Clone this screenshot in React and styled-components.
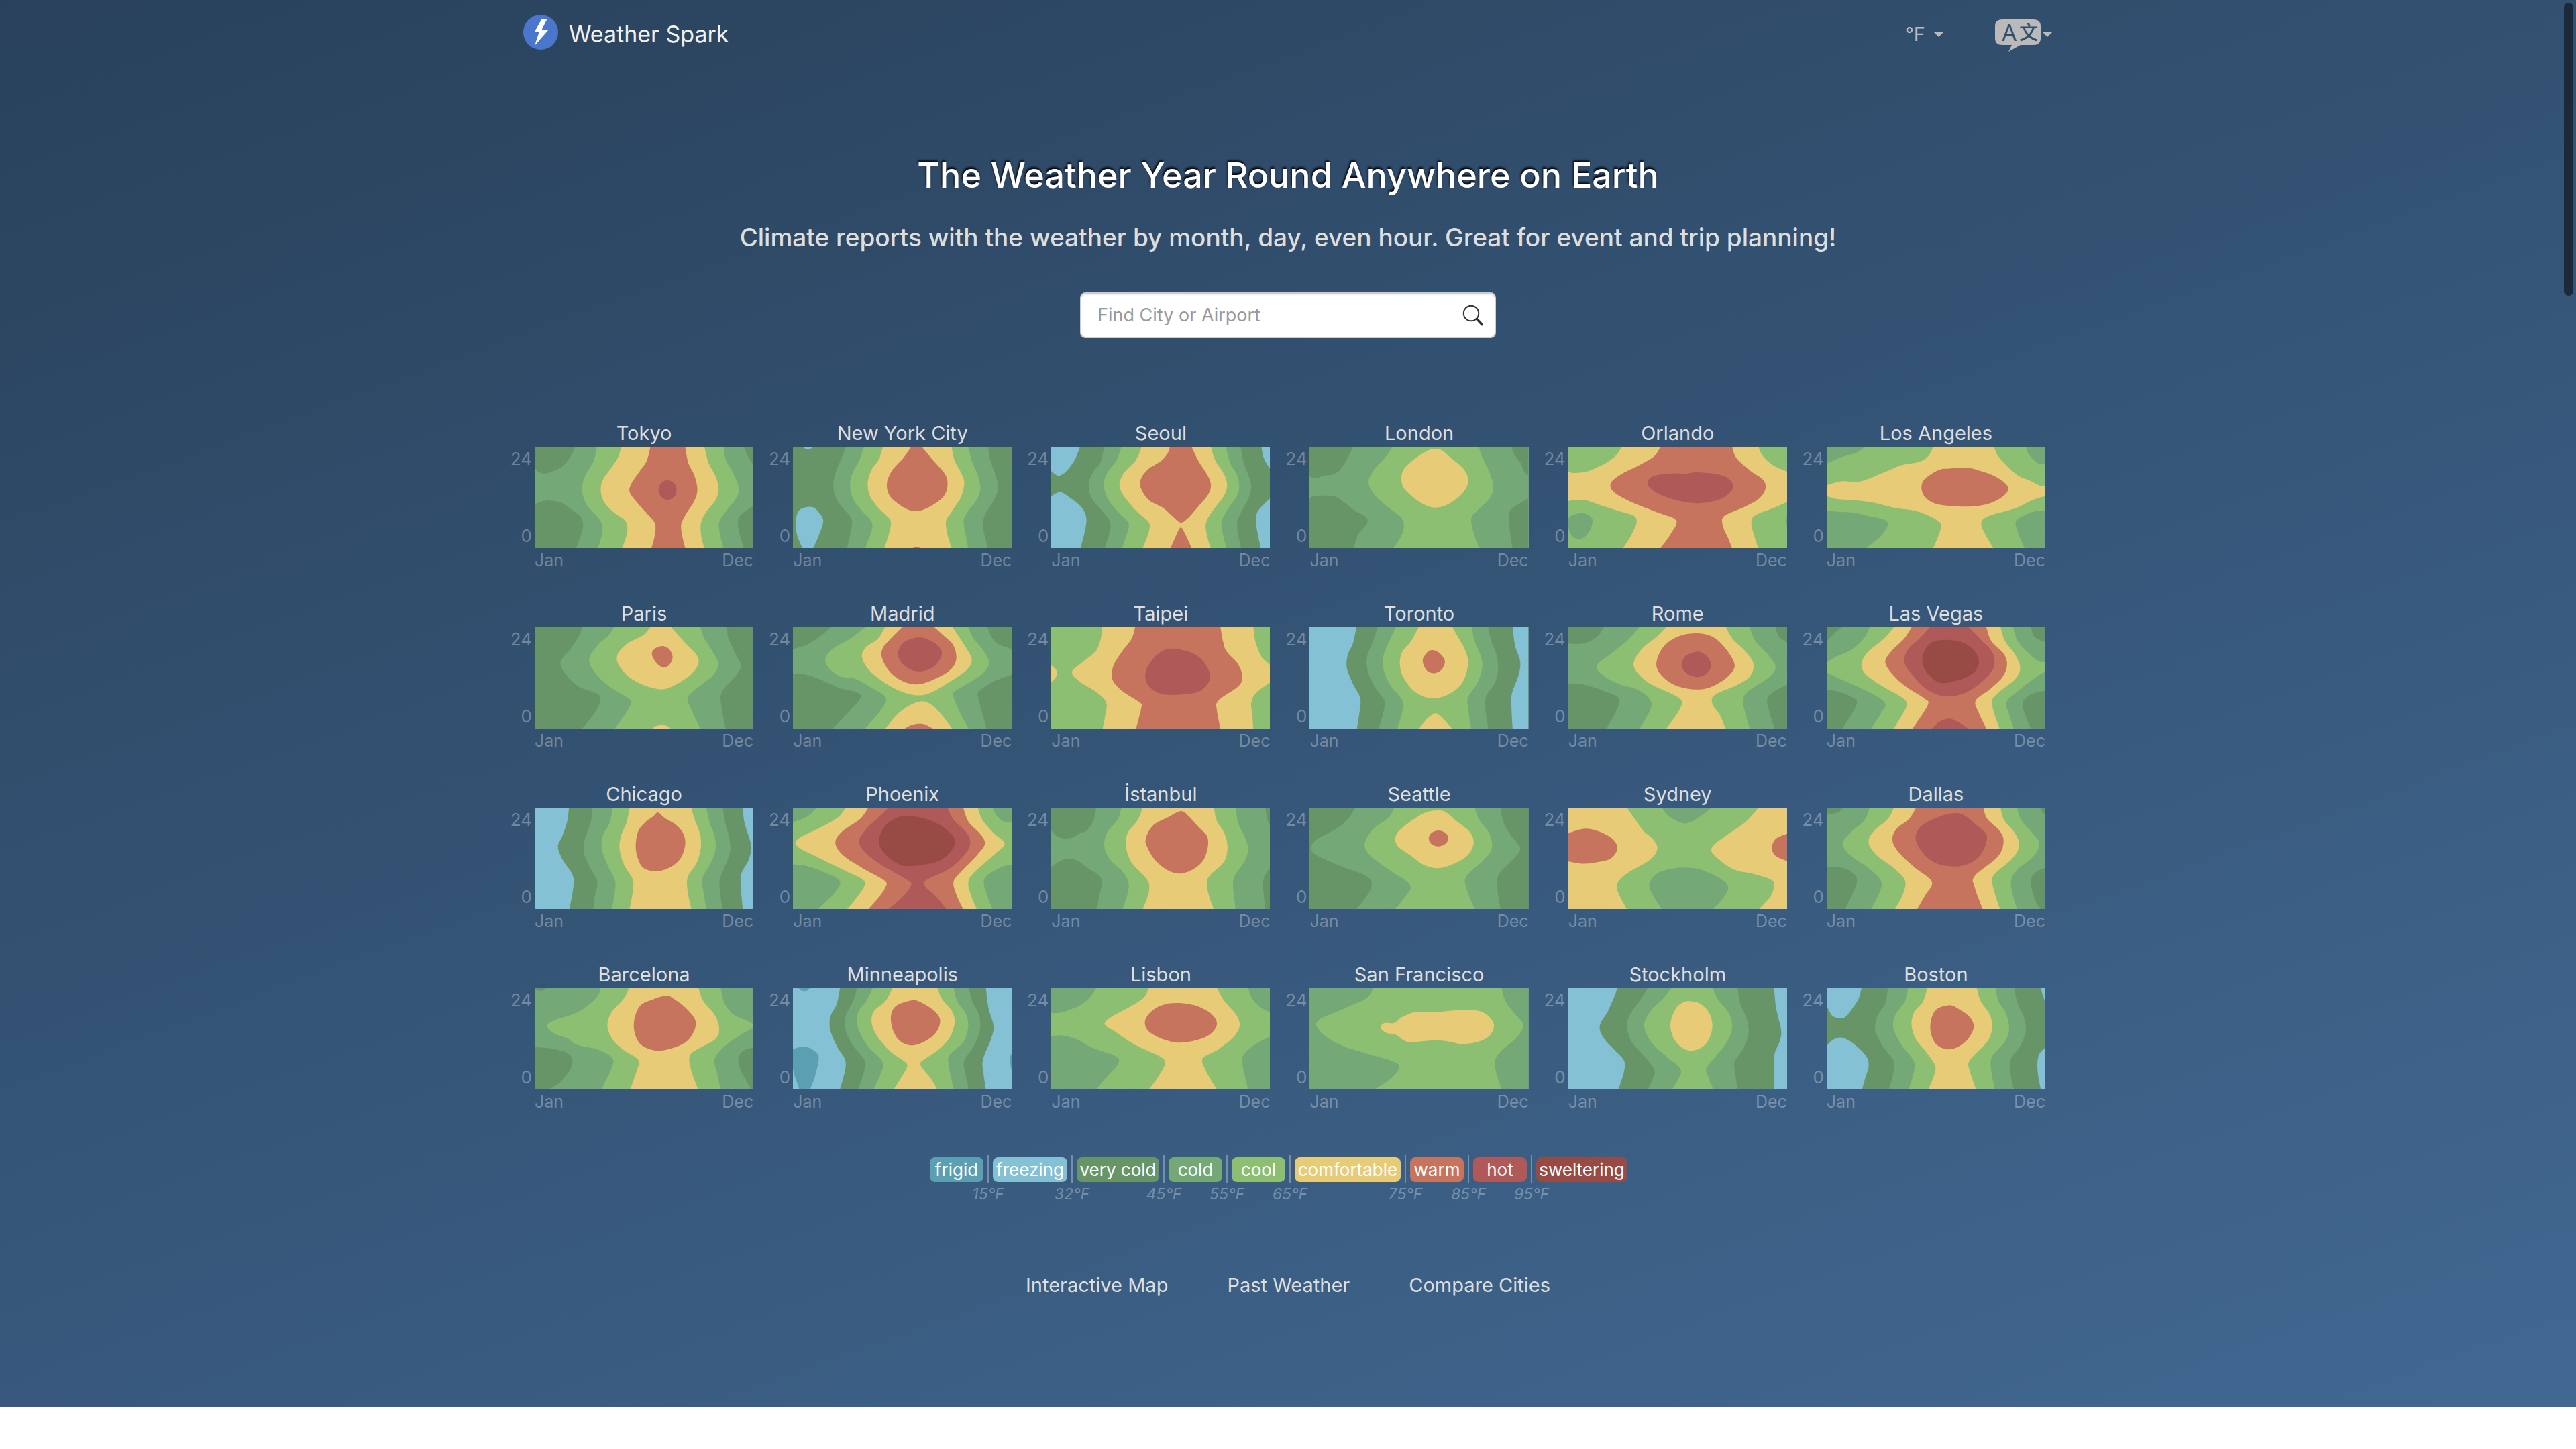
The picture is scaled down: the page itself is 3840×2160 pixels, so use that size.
import React from 'react';
import styled, { createGlobalStyle } from 'styled-components';

const GlobalStyle = createGlobalStyle`
  *, *::before, *::after { box-sizing: border-box; }
  body {
    margin: 0;
    background: #fff;
    font-family: Inter, "Noto Sans", "Noto Sans CJK SC", sans-serif;
  }
`;

const BANDS = {
  f: '#5b9fb3',
  z: '#84c1d4',
  v: '#689567',
  c: '#75a877',
  g: '#8cbf71',
  y: '#e8cb77',
  w: '#c7745f',
  h: '#af5958',
  s: '#984b44',
};

/* ---------- contour geometry ---------- */

const parse = (text) =>
  text.trim().split(/\s+/).map((pair) => pair.split(',').map(Number));

const segment = (a, b, c, d) => {
  const k = 6;
  const x1 = b[0] + (c[0] - a[0]) / k;
  const y1 = b[1] + (c[1] - a[1]) / k;
  const x2 = c[0] - (d[0] - b[0]) / k;
  const y2 = c[1] - (d[1] - b[1]) / k;
  return `C${x1.toFixed(1)},${y1.toFixed(1)} ${x2.toFixed(1)},${y2.toFixed(1)} ${c[0]},${c[1]}`;
};

const openCurve = (p) =>
  p.slice(1).map((pt, i) => segment(p[i - 1] || p[i], p[i], pt, p[i + 2] || pt)).join('');

const closedCurve = (p) => {
  const n = p.length;
  return p.map((pt, i) => segment(p[(i + n - 1) % n], pt, p[(i + 1) % n], p[(i + 2) % n])).join('');
};

/* 'o' is an island, 'b' a band between two top-to-bottom curves, 'e' curves joined by straight edges */
const contourPath = (kind, text) => {
  const curves = text.split('|').map(parse);
  if (kind === 'o') return `M${curves[0][0]}${closedCurve(curves[0])}Z`;
  if (kind === 'b') curves[1].reverse();
  return curves.map((p, i) => `${i ? 'L' : 'M'}${p[0]}${openCurve(p)}`).join('') + 'Z';
};

/* ---------- data ---------- */

const CITIES = [
  { name: 'Tokyo', base: 'c', at: [76, 138], shapes: [
    ['v', 'e', '156,138 148,178 130,228 100,256 84,250 76,230|76,138'],
    ['v', 'e', '76,395 90,382 106,378 130,388 150,420 167,450 172,490 165,550 158,591|76,591'],
    ['v', 'e', '490,138 498,180 509,220|509,138'],
    ['v', 'e', '509,402 490,430 479,460 480,510 490,591|509,591'],
    ['g', 'b', '199,138 193,200 180,250 171,300 171,350 180,400 200,450 210,490 208,540 201,591|450,138 455,200 470,260 480,325 474,370 455,425 441,475 443,530 450,591'],
    ['y', 'b', '248,138 240,190 225,240 210,290 207,340 215,390 235,435 256,470 259,520 249,591|412,138 420,210 434,270 440,325 434,375 415,430 405,480 406,540 412,591'],
    ['w', 'b', '305,138 298,200 283,250 268,300 264,340 280,390 300,440 314,480 314,530 307,591|374,138 380,210 392,265 398,325 393,375 375,440 366,485 368,535 374,591'],
    ['h', 'o', '339,286 353,304 357,335 352,362 339,375 326,360 321,330 327,300'],
  ] },
  { name: 'New York City', base: 'v', at: [587, 138], shapes: [
    ['z', 'e', '627,591 637,540 647,470 638,430 627,408 612,408 598,425 593,470 595,530 606,591'],
    ['z', 'e', '607,138 612,147 619,150 627,138'],
    ['c', 'b', '692,138 683,190 672,250 667,305 671,360 685,410 702,455 703,500 694,591|973,138 978,200 988,265 993,320 986,370 970,430 963,475 966,530 973,591'],
    ['g', 'b', '728,138 718,200 706,250 700,305 706,370 724,425 742,470 743,510 730,591|934,138 941,200 952,260 958,320 952,370 935,420 925,465 928,520 934,591'],
    ['y', 'b', '765,138 757,195 743,240 735,300 740,360 758,415 778,460 780,500 768,591|901,138 907,200 920,255 926,300 920,360 902,425 890,470 893,530 901,591'],
    ['w', 'e', '821,138 805,190 783,245 773,300 778,355 800,400 820,422 840,422 862,400 885,360 893,310 888,260 865,200 842,138'],
    ['w', 'e', '823,591 831,584 841,591'],
  ] },
  { name: 'Seoul', base: 'v', at: [1099, 138], shapes: [
    ['z', 'e', '1156,138 1146,195 1130,245 1116,267 1108,262 1099,246|1099,138'],
    ['z', 'e', '1099,360 1108,346 1118,341 1130,355 1158,405 1168,450 1167,500 1157,591|1099,591'],
    ['z', 'e', '1515,138 1520,190 1533,240|1533,138'],
    ['z', 'e', '1533,367 1520,395 1507,430 1504,470 1508,530 1514,591|1533,591'],
    ['c', 'b', '1204,138 1196,210 1181,255 1173,310 1180,370 1200,425 1215,470 1215,515 1205,591|1474,138 1480,210 1490,270 1495,310 1490,365 1475,430 1467,475 1469,530 1475,591'],
    ['g', 'b', '1238,138 1228,200 1211,250 1203,305 1211,370 1230,425 1251,475 1251,510 1239,591|1445,138 1453,210 1466,260 1471,310 1466,360 1446,425 1436,475 1439,530 1446,591'],
    ['y', 'b', '1278,138 1266,200 1243,255 1234,310 1245,365 1270,430 1292,475 1292,520 1280,591|1415,138 1424,200 1441,260 1447,310 1440,360 1418,425 1405,480 1408,540 1415,591'],
    ['w', 'e', '1334,138 1330,165 1317,200 1290,240 1276,285 1277,325 1292,375 1320,410 1340,450 1355,476 1368,460 1390,405 1410,350 1415,305 1407,260 1390,200 1377,138'],
    ['w', 'e', '1335,591 1345,540 1353,502 1358,502 1368,545 1377,591'],
  ] },
  { name: 'London', base: 'c', at: [44, 138], shapes: [
    ['v', 'e', '130,138 120,185 105,240 90,262 72,266 58,278 44,270|44,138'],
    ['v', 'e', '44,368 55,357 92,359 112,385 135,425 155,450 158,480 140,530 132,591|44,591'],
    ['v', 'e', '444,138 450,175 462,210 468,245 477,265|477,138'],
    ['v', 'e', '477,370 460,390 442,420 439,450 441,520 446,591|477,591'],
    ['g', 'b', '208,138 196,180 172,240 161,295 172,350 198,405 224,450 231,490 225,540 210,591|379,138 387,190 400,250 408,315 400,370 375,425 364,460 370,530 380,591'],
    ['y', 'o', '293,147 308,157 325,190 350,240 358,295 345,350 318,395 293,410 270,395 245,355 228,310 228,250 245,205 275,158'],
  ] },
  { name: 'Orlando', base: 'y', at: [555, 138], shapes: [
    ['g', 'e', '660,138 650,175 630,210 610,232 592,248 570,255 555,251|555,138'],
    ['g', 'e', '555,380 570,375 590,377 620,400 660,428 684,445 690,475 680,530 663,591|555,591'],
    ['g', 'e', '931,138 940,180 960,220 989,250|989,138'],
    ['g', 'e', '989,383 960,412 925,443 917,475 922,530 931,591|989,591'],
    ['c', 'o', '577,434 593,440 603,465 598,510 587,540 576,552 565,540 557,515 555,480 557,450'],
    ['c', 'e', '989,445 985,470 989,500'],
    ['w', 'b', '737,138 725,180 697,218 660,260 639,300 645,340 680,385 730,430 768,466 758,525 737,591|879,138 888,190 915,245 940,285 945,325 932,370 900,410 862,450 862,500 871,545 879,591'],
    ['h', 'o', '712,300 718,275 740,260 770,256 785,259 810,252 850,261 872,280 881,318 865,360 840,382 808,390 775,380 740,355 718,325'],
  ] },
  { name: 'Los Angeles', base: 'g', at: [1067, 138], shapes: [
    ['c', 'e', '1143,138 1125,165 1095,185 1067,213|1067,138'],
    ['c', 'e', '1067,422 1085,427 1120,432 1150,447 1180,463 1188,487 1175,535 1145,591|1067,591'],
    ['c', 'e', '1461,138 1468,175 1485,212 1501,217|1501,138'],
    ['c', 'e', '1501,422 1480,425 1455,447 1441,475 1447,530 1459,591|1501,591'],
    ['y', 'e', '1278,138 1268,180 1250,205 1215,220 1185,248 1145,285 1125,295 1095,292 1067,310|1067,358 1090,372 1130,378 1165,390 1205,412 1245,425 1285,465 1293,500 1278,591|1397,591 1380,525 1373,475 1390,445 1440,413 1475,375 1501,357|1501,315 1490,312 1470,290 1445,265 1420,215 1405,175 1398,138'],
    ['w', 'o', '1347,232 1380,252 1408,280 1426,318 1418,355 1390,390 1347,405 1290,396 1265,370 1255,330 1260,285 1288,242 1310,235'],
  ] },
  { name: 'Paris', base: 'v', at: [76, 948], shapes: [
    ['c', 'b', '170,948 163,990 145,1050 127,1105 140,1165 165,1215 200,1245 206,1275 195,1330 170,1400|455,948 460,1000 472,1060 484,1120 472,1170 447,1235 445,1290 454,1400'],
    ['g', 'b', '233,948 222,985 200,1030 184,1090 195,1150 225,1215 264,1270 262,1310 235,1400|404,948 412,1000 428,1055 439,1110 430,1160 400,1215 379,1260 385,1310 404,1400'],
    ['y', 'e', '305,948 290,985 260,1020 241,1065 241,1110 260,1165 290,1205 325,1225 350,1210 385,1160 400,1110 396,1070 375,1020 346,948'],
    ['w', 'o', '328,1032 342,1045 349,1080 343,1115 331,1128 318,1110 308,1070 313,1045'],
    ['y', 'e', '309,1400 318,1387 335,1386 345,1400'],
  ] },
  { name: 'Madrid', base: 'c', at: [587, 948], shapes: [
    ['v', 'e', '663,948 640,990 615,1025 587,1046|587,948'],
    ['v', 'e', '587,1158 610,1158 640,1180 680,1220 713,1238 721,1262 700,1320 666,1400|587,1400'],
    ['v', 'e', '972,948 980,990 995,1025 1022,1046|1022,948'],
    ['v', 'e', '1022,1158 985,1190 955,1235 955,1275 963,1340 970,1400|1022,1400'],
    ['g', 'b', '730,948 700,1000 665,1045 651,1090 658,1130 680,1167 710,1178 740,1215 771,1262 760,1320 730,1400|934,948 945,1000 965,1055 975,1110 960,1160 925,1210 905,1240 908,1280 920,1340 935,1400'],
    ['y', 'e', '769,948 755,1000 730,1040 724,1085 740,1145 775,1205 805,1238 835,1252 862,1238 895,1195 930,1140 941,1095 930,1040 903,948'],
    ['w', 'e', '803,948 780,1000 764,1045 764,1090 780,1150 805,1190 833,1203 862,1185 895,1145 910,1095 905,1030 885,985 867,948'],
    ['h', 'o', '835,993 860,1008 878,1040 881,1075 865,1125 835,1145 808,1120 795,1070 805,1018'],
    ['y', 'e', '770,1400 790,1345 815,1300 842,1278 862,1295 880,1335 902,1400'],
    ['w', 'e', '808,1400 825,1382 845,1380 864,1400'],
  ] },
  { name: 'Taipei', base: 'y', at: [1099, 948], shapes: [
    ['g', 'e', '1200,948 1197,1000 1187,1055 1160,1105 1140,1148 1155,1190 1190,1240 1208,1285 1206,1340 1201,1400|1099,1400|1099,948'],
    ['g', 'e', '1499,948 1503,1010 1515,1078 1533,1118|1533,948'],
    ['g', 'e', '1533,1193 1505,1240 1495,1285 1497,1340 1499,1400|1533,1400'],
    ['y', 'e', '1099,1118 1108,1135 1111,1155 1106,1178 1099,1192'],
    ['w', 'b', '1265,948 1258,1000 1238,1060 1222,1120 1220,1180 1238,1230 1275,1285 1277,1310 1267,1400|1434,948 1439,1010 1446,1055 1468,1110 1477,1165 1470,1210 1430,1275 1427,1320 1434,1400'],
    ['h', 'o', '1338,1043 1375,1060 1400,1100 1414,1165 1405,1210 1385,1240 1335,1250 1305,1235 1288,1195 1286,1145 1300,1090 1318,1055'],
  ] },
  { name: 'Toronto', base: 'v', at: [44, 948], shapes: [
    ['z', 'e', '137,948 130,1020 120,1070 118,1130 130,1200 144,1260 144,1310 138,1400|44,1400|44,948'],
    ['z', 'e', '446,948 451,1030 461,1100 458,1160 444,1250 444,1320 446,1400|477,1400|477,948'],
    ['c', 'b', '179,948 170,1010 158,1080 160,1150 175,1220 192,1275 190,1330 181,1400|398,948 404,1010 414,1070 417,1140 410,1200 392,1265 393,1330 398,1400'],
    ['g', 'b', '215,948 202,1010 190,1080 191,1140 205,1210 228,1275 228,1320 218,1400|365,948 371,1010 382,1070 386,1120 378,1190 358,1260 358,1310 364,1400'],
    ['y', 'e', '260,948 245,1010 227,1060 223,1120 232,1180 255,1240 290,1266 325,1240 348,1190 358,1110 352,1050 340,1000 327,948'],
    ['w', 'o', '288,1050 302,1065 312,1100 305,1138 290,1153 275,1138 268,1095 277,1060'],
    ['y', 'e', '261,1400 275,1360 290,1334 298,1336 312,1365 326,1400'],
  ] },
  { name: 'Rome', base: 'c', at: [555, 948], shapes: [
    ['v', 'e', '625,948 612,990 590,1017 570,1023 555,1020|555,948'],
    ['v', 'e', '555,1200 568,1199 590,1207 625,1232 655,1265 650,1320 630,1400|555,1400'],
    ['v', 'e', '965,948 972,990 989,1020|989,948'],
    ['v', 'e', '989,1203 965,1230 949,1265 952,1320 963,1400|989,1400'],
    ['g', 'b', '695,948 675,1000 640,1065 611,1120 625,1165 655,1202 690,1225 715,1265 718,1310 696,1400|914,948 925,1010 950,1070 965,1125 950,1175 910,1235 901,1275 905,1330 914,1400'],
    ['y', 'b', '748,948 730,990 700,1045 684,1110 695,1160 720,1205 775,1265 776,1310 749,1400|867,948 880,1000 905,1055 921,1110 915,1165 890,1205 845,1250 840,1290 855,1340 866,1400'],
    ['w', 'o', '811,975 840,990 865,1040 884,1115 872,1165 848,1203 822,1224 790,1222 760,1200 738,1160 729,1115 737,1055 755,1010 780,983'],
    ['h', 'o', '815,1058 830,1080 838,1120 828,1155 811,1170 790,1155 779,1120 785,1080 800,1062'],
  ] },
  { name: 'Las Vegas', base: 'c', at: [1067, 948], shapes: [
    ['v', 'e', '1096,948 1082,975 1067,1010|1067,948'],
    ['v', 'e', '1067,1227 1090,1235 1115,1257 1127,1282 1118,1330 1098,1400|1067,1400'],
    ['v', 'e', '1471,948 1478,990 1495,1010 1501,1010|1501,948'],
    ['v', 'e', '1501,1230 1480,1240 1460,1265 1455,1295 1460,1340 1471,1400|1501,1400'],
    ['g', 'e', '1152,948 1140,1000 1115,1050 1085,1080 1067,1105|1067,1150 1095,1180 1130,1215 1165,1255 1183,1290 1175,1330 1155,1400|1437,1400 1427,1330 1423,1280 1450,1225 1485,1165 1501,1145|1501,1105 1485,1098 1465,1060 1445,1010 1436,948'],
    ['y', 'b', '1200,948 1180,1000 1150,1055 1136,1110 1145,1160 1180,1215 1215,1260 1225,1300 1200,1400|1411,948 1420,1010 1440,1070 1450,1130 1440,1180 1415,1225 1395,1270 1397,1320 1409,1400'],
    ['w', 'b', '1235,948 1220,1000 1195,1055 1183,1105 1200,1165 1225,1215 1260,1265 1267,1295 1237,1400|1383,948 1393,1010 1417,1065 1424,1115 1415,1170 1390,1225 1362,1275 1368,1330 1383,1400'],
    ['h', 'e', '1271,948 1250,1000 1227,1050 1221,1105 1240,1170 1268,1230 1303,1256 1340,1242 1375,1190 1398,1125 1395,1060 1375,1010 1348,948'],
    ['s', 'o', '1300,1004 1335,1015 1358,1050 1368,1095 1362,1140 1340,1175 1300,1197 1278,1180 1260,1130 1257,1075 1272,1020'],
    ['h', 'e', '1275,1400 1290,1370 1308,1356 1325,1368 1347,1400'],
  ] },
  { name: 'Chicago', base: 'v', at: [76, 135], shapes: [
    ['z', 'e', '144,135 140,200 130,265 122,310 132,370 150,430 153,480 145,588|76,588|76,135'],
    ['z', 'e', '488,135 491,200 500,265 505,315 499,370 485,430 484,490 488,588|509,588|509,135'],
    ['c', 'b', '191,135 187,200 176,270 173,330 185,400 200,465 195,530 192,588|448,135 454,210 461,270 463,330 452,400 442,460 444,530 448,588'],
    ['g', 'b', '230,135 225,200 211,260 209,320 220,390 235,460 234,520 229,588|416,135 422,200 432,260 434,320 425,380 408,450 410,510 416,588'],
    ['y', 'b', '264,135 258,200 247,260 244,320 253,390 270,455 270,510 264,588|386,135 393,190 403,250 405,310 397,380 379,445 379,510 386,588'],
    ['w', 'o', '320,156 333,180 355,210 370,250 374,300 365,360 345,400 318,419 292,405 280,360 276,305 281,240 295,200 310,175'],
  ] },
  { name: 'Phoenix', base: 'g', at: [587, 135], shapes: [
    ['c', 'e', '634,135 615,175 587,200|587,135'],
    ['c', 'e', '587,389 610,393 640,415 680,463 665,525 636,588|587,588'],
    ['c', 'e', '982,135 990,170 1005,198 1022,200|1022,135'],
    ['c', 'e', '1022,388 1000,400 970,440 965,475 972,530 982,588|1022,588'],
    ['y', 'b', '692,135 675,180 640,225 597,275 597,310 630,350 680,405 725,455 728,485 710,545 694,588|953,135 962,190 985,250 1006,295 985,345 945,425 934,470 940,530 951,588'],
    ['w', 'b', '736,135 720,185 685,240 671,290 685,345 725,405 768,460 770,490 755,540 736,588|924,135 935,200 957,250 967,295 952,345 920,420 905,465 910,520 924,588'],
    ['h', 'b', '776,135 755,180 730,235 718,285 730,335 765,395 815,460 820,485 805,530 776,588|893,135 905,190 930,245 938,295 925,350 895,410 850,460 850,490 870,530 891,588'],
    ['s', 'o', '815,171 850,185 880,215 903,260 908,295 895,340 870,378 815,396 790,380 765,330 757,280 770,215 795,178'],
  ] },
  { name: 'İstanbul', base: 'c', at: [1099, 135], shapes: [
    ['v', 'e', '1188,135 1183,190 1170,235 1155,250 1140,269 1122,272 1108,258 1099,235|1099,135'],
    ['v', 'e', '1099,400 1112,378 1130,363 1150,370 1172,405 1195,440 1199,475 1193,540 1190,588|1099,588'],
    ['v', 'e', '1523,135 1527,190 1533,220|1533,135'],
    ['v', 'e', '1533,405 1522,435 1518,475 1520,530 1523,588|1533,588'],
    ['g', 'b', '1238,135 1230,190 1210,245 1204,305 1215,365 1240,420 1252,470 1250,520 1240,588|1464,135 1470,210 1483,270 1489,325 1480,380 1462,440 1459,490 1464,588'],
    ['y', 'b', '1280,135 1270,190 1250,250 1247,310 1258,380 1285,445 1293,480 1290,530 1280,588|1421,135 1427,195 1442,250 1448,315 1440,380 1412,440 1407,480 1413,540 1421,588'],
    ['w', 'o', '1355,150 1370,170 1390,220 1407,260 1409,310 1400,370 1380,410 1355,429 1330,415 1305,370 1290,315 1286,275 1300,215 1330,178'],
  ] },
  { name: 'Seattle', base: 'v', at: [44, 135], shapes: [
    ['c', 'b', '135,135 122,180 100,225 60,275 47,315 60,350 105,395 155,438 167,475 160,520 137,588|422,135 428,200 443,260 461,318 445,370 418,435 416,500 422,588'],
    ['g', 'b', '212,135 200,180 168,235 153,300 165,350 200,410 243,480 232,535 213,588|371,135 380,190 400,250 405,315 388,370 355,440 354,490 371,588'],
    ['y', 'o', '299,147 315,157 335,195 360,240 369,290 358,345 330,385 299,405 270,390 245,350 218,305 215,260 230,220 270,160'],
    ['w', 'o', '299,237 313,247 319,272 313,297 299,308 285,297 280,270 286,247'],
  ] },
  { name: 'Sydney', base: 'g', at: [555, 135], shapes: [
    ['y', 'e', '671,135 685,180 702,235 722,275 731,320 715,370 670,430 651,480 657,530 671,588|555,588|555,135'],
    ['y', 'e', '931,135 905,200 870,255 838,318 855,370 885,413 920,430 955,455 962,480 955,530 932,588|989,588|989,135'],
    ['w', 'e', '555,248 585,229 610,237 640,270 652,315 640,360 615,377 585,385 555,375'],
    ['w', 'e', '989,250 965,275 958,315 965,350 989,375'],
    ['c', 'e', '740,135 755,175 785,205 812,180 838,135'],
    ['c', 'e', '740,588 725,535 715,480 730,430 760,407 785,402 815,410 850,445 871,485 862,535 841,588'],
  ] },
  { name: 'Dallas', base: 'c', at: [1067, 135], shapes: [
    ['v', 'e', '1100,135 1090,155 1067,167|1067,135'],
    ['v', 'e', '1067,398 1100,405 1120,430 1127,465 1115,535 1103,588|1067,588'],
    ['v', 'e', '1490,135 1494,155 1501,165|1501,135'],
    ['v', 'e', '1501,402 1480,425 1471,460 1477,530 1489,588|1501,588'],
    ['g', 'b', '1152,135 1142,190 1115,245 1099,297 1115,350 1150,405 1174,460 1172,510 1155,588|1444,135 1452,190 1475,250 1488,297 1475,355 1445,410 1432,460 1435,520 1444,588'],
    ['y', 'b', '1200,135 1188,185 1160,240 1150,290 1165,345 1200,405 1222,460 1218,520 1202,588|1411,135 1418,190 1440,250 1448,305 1435,360 1400,430 1395,475 1410,588'],
    ['w', 'b', '1244,135 1230,185 1205,230 1197,280 1210,335 1240,400 1275,465 1262,525 1246,588|1377,135 1385,185 1410,240 1417,290 1405,355 1360,440 1360,490 1376,588'],
    ['h', 'o', '1320,159 1340,170 1365,215 1382,250 1383,290 1370,350 1345,388 1315,397 1280,380 1255,330 1243,270 1255,215 1290,175'],
  ] },
  { name: 'Barcelona', base: 'c', at: [76, 942], shapes: [
    ['v', 'e', '102,942 90,953 76,948|76,942'],
    ['v', 'e', '76,1205 110,1212 140,1230 151,1265 145,1310 125,1365 102,1395|76,1395'],
    ['v', 'e', '509,1207 490,1220 479,1255 484,1310 505,1395|509,1395'],
    ['g', 'e', '207,942 198,985 165,1045 115,1085 101,1112 115,1145 140,1165 160,1195 200,1215 228,1250 230,1290 208,1395|444,1395 437,1320 432,1260 450,1205 480,1155 509,1118|509,1102 495,1085 470,1060 452,1010 444,942'],
    ['y', 'b', '263,942 252,990 228,1050 220,1110 230,1170 250,1215 281,1262 278,1310 265,1395|400,942 410,1000 432,1060 441,1120 433,1170 390,1225 382,1260 388,1325 400,1395'],
    ['w', 'o', '337,975 350,988 375,1030 394,1085 390,1140 370,1190 325,1221 290,1200 275,1150 273,1085 285,1020 310,992'],
  ] },
  { name: 'Minneapolis', base: 'z', at: [587, 942], shapes: [
    ['f', 'e', '598,942 605,955 612,957 621,942'],
    ['f', 'e', '587,1215 600,1205 612,1203 627,1218 638,1250 632,1325 621,1395|600,1395 590,1330 587,1300'],
    ['f', 'e', '1022,1225 1017,1250 1018,1290 1022,1320'],
    ['v', 'b', '680,942 674,1010 661,1070 661,1130 675,1205 690,1260 690,1310 680,1395|969,942 974,1030 984,1110 979,1170 963,1260 964,1320 969,1395'],
    ['c', 'b', '714,942 706,1000 692,1060 690,1120 705,1195 729,1265 728,1310 716,1395|935,942 942,1000 955,1060 957,1130 945,1200 926,1265 928,1320 935,1395'],
    ['g', 'b', '745,942 732,1000 716,1050 716,1120 735,1200 763,1265 763,1310 746,1395|905,942 912,1000 928,1050 934,1110 925,1180 897,1240 895,1280 898,1320 905,1395'],
    ['y', 'b', '784,942 770,1000 747,1045 743,1100 755,1160 780,1225 808,1270 813,1292 800,1345 786,1395|873,942 882,990 902,1045 907,1100 895,1170 870,1225 841,1270 841,1292 860,1345 873,1395'],
    ['w', 'o', '823,996 840,1005 865,1040 878,1080 873,1130 855,1170 825,1197 800,1180 785,1130 781,1065 792,1020'],
  ] },
  { name: 'Lisbon', base: 'g', at: [1099, 942], shapes: [
    ['c', 'e', '1188,942 1175,985 1155,1020 1120,1050 1099,1053|1099,942'],
    ['c', 'e', '1099,1155 1120,1153 1150,1170 1180,1208 1228,1248 1230,1285 1210,1335 1188,1395|1099,1395'],
    ['c', 'e', '1489,942 1497,990 1515,1030 1533,1050|1533,942'],
    ['c', 'e', '1533,1157 1505,1190 1480,1240 1478,1290 1489,1395|1533,1395'],
    ['y', 'b', '1292,942 1282,985 1255,1025 1218,1070 1205,1102 1225,1135 1265,1195 1315,1248 1324,1280 1310,1340 1292,1395|1427,942 1442,1000 1465,1060 1472,1110 1460,1160 1430,1215 1399,1255 1405,1310 1427,1395'],
    ['w', 'o', '1350,1008 1385,1020 1415,1055 1427,1100 1415,1145 1390,1172 1350,1185 1315,1165 1290,1130 1285,1085 1300,1040 1322,1015'],
  ] },
  { name: 'San Francisco', base: 'c', at: [44, 942], shapes: [
    ['g', 'b', '171,942 158,985 130,1015 95,1050 65,1080 58,1110 75,1155 110,1200 160,1235 205,1265 222,1292 205,1345 172,1395|424,942 432,1000 450,1055 467,1105 455,1160 418,1235 411,1280 415,1330 424,1395'],
    ['y', 'o', '185,1118 192,1098 212,1097 228,1070 255,1048 295,1049 325,1042 370,1040 395,1060 409,1105 400,1155 375,1183 345,1191 318,1180 290,1175 240,1182 215,1150 195,1140'],
  ] },
  { name: 'Stockholm', base: 'v', at: [555, 942], shapes: [
    ['z', 'e', '652,942 645,985 633,1045 617,1110 625,1165 645,1215 665,1265 665,1315 654,1395|555,1395|555,942'],
    ['z', 'e', '962,942 966,1030 976,1130 973,1180 962,1250 962,1395|989,1395|989,942'],
    ['c', 'b', '712,942 697,995 678,1055 671,1110 680,1180 705,1245 725,1305 722,1345 712,1395|890,942 895,1010 909,1085 911,1150 900,1215 884,1270 885,1320 890,1395'],
    ['g', 'b', '759,942 742,990 717,1045 705,1110 718,1180 745,1240 776,1300 774,1340 760,1395|841,942 850,990 873,1055 879,1120 868,1185 845,1250 828,1300 832,1340 842,1395'],
    ['y', 'o', '797,1000 815,1010 833,1050 840,1110 833,1170 818,1208 797,1221 778,1205 762,1160 757,1100 767,1035 782,1005'],
  ] },
  { name: 'Boston', base: 'v', at: [1067, 942], shapes: [
    ['z', 'e', '1136,942 1130,990 1117,1035 1104,1070 1092,1075 1078,1065 1067,1020|1067,942'],
    ['z', 'e', '1067,1200 1080,1172 1098,1163 1120,1190 1145,1245 1150,1290 1143,1345 1137,1395|1067,1395'],
    ['z', 'e', '1491,942 1495,975 1501,1012|1501,942'],
    ['z', 'e', '1501,1205 1488,1235 1484,1280 1486,1340 1491,1395|1501,1395'],
    ['c', 'b', '1188,942 1183,1010 1168,1065 1163,1130 1178,1200 1200,1270 1198,1330 1190,1395|1438,942 1445,1010 1457,1070 1461,1135 1450,1200 1431,1260 1431,1330 1438,1395'],
    ['g', 'b', '1228,942 1222,1000 1203,1060 1199,1120 1215,1195 1240,1270 1238,1330 1229,1395|1401,942 1407,1000 1422,1055 1428,1120 1420,1180 1395,1245 1392,1300 1400,1395'],
    ['y', 'b', '1266,942 1258,1000 1240,1050 1235,1110 1245,1175 1265,1230 1282,1290 1278,1340 1268,1395|1364,942 1372,1000 1390,1060 1394,1120 1385,1180 1350,1265 1350,1310 1363,1395'],
    ['w', 'o', '1308,1018 1325,1030 1350,1070 1358,1115 1348,1165 1330,1200 1308,1215 1285,1195 1273,1140 1274,1080 1285,1035'],
  ] },
];

const LEGEND = [
  { label: 'frigid', band: 'f', width: 80, limit: '15°F' },
  { label: 'freezing', band: 'z', width: 111, limit: '32°F' },
  { label: 'very cold', band: 'v', width: 123, limit: '45°F' },
  { label: 'cold', band: 'c', width: 80, limit: '55°F' },
  { label: 'cool', band: 'g', width: 80, limit: '65°F' },
  { label: 'comfortable', band: 'y', width: 158, limit: '75°F' },
  { label: 'warm', band: 'w', width: 80, limit: '85°F' },
  { label: 'hot', band: 'h', width: 80, limit: '95°F' },
  { label: 'sweltering', band: 's', width: 136 },
];

/* ---------- parts ---------- */

const Page = styled.div`
  position: relative;
  background: linear-gradient(160deg, #29415a 0%, #355577 50%, #426892 100%);
  color: #dedede;
`;

const Header = styled.header`
  display: flex;
  align-items: center;
  justify-content: space-between;
  max-width: 2280px;
  height: 102px;
  margin: 0 auto;
`;

const Brand = styled.a`
  display: flex;
  align-items: center;
  gap: 16px;
  color: #f2f2f2;
  font-size: 34px;
  line-height: 52px;
  text-decoration: none;
  svg { display: block; width: 52px; height: 52px; margin-bottom: 6px; }
`;

const Tools = styled.div`
  display: flex;
  align-items: center;
  gap: 76px;
`;

const MenuButton = styled.button`
  display: flex;
  align-items: center;
  gap: ${(p) => p.$gap}px;
  padding: 0;
  border: 0;
  background: none;
  color: #bababa;
  font: inherit;
  font-size: 29px;
  line-height: 48px;
  cursor: pointer;
`;

const LanguageIcon = styled.svg`
  width: 68px;
  height: 68px;
  margin-top: 4px;
  overflow: visible;
`;

const Caret = styled.span`
  border: 8px solid transparent;
  border-top-color: currentColor;
  border-bottom: 0;
`;

const Hero = styled.section`
  display: flex;
  flex-direction: column;
  align-items: center;
  padding-top: 124px;
  text-align: center;
`;

const Title = styled.h1`
  margin: 0;
  color: #fff;
  font-size: 52px;
  font-weight: 500;
  line-height: 72px;
  text-shadow: -1px -3px 3px rgba(0, 0, 0, 0.9);
`;

const Subtitle = styled.p`
  margin: 30px 0 0;
  font-size: 37px;
  font-weight: 500;
  line-height: 52px;
`;

const SearchForm = styled.form`
  display: flex;
  align-items: center;
  width: 620px;
  max-width: 100%;
  height: 68px;
  margin-top: 56px;
  padding-right: 16px;
  border: 2px solid #ccc;
  border-radius: 8px;
  background: #fff;
  box-shadow: inset 0 2px 2px rgba(0, 0, 0, 0.08);
`;

const SearchInput = styled.input`
  flex: 1;
  min-width: 0;
  padding: 0 24px;
  border: 0;
  outline: 0;
  background: none;
  color: #333;
  font: inherit;
  font-size: 27px;
  line-height: 40px;
  &::placeholder { color: #999; opacity: 1; }
`;

const SearchButton = styled.button`
  display: flex;
  padding: 0;
  border: 0;
  background: none;
  color: #333;
  cursor: pointer;
  svg { width: 32px; height: 32px; }
`;

const CityGrid = styled.ul`
  display: grid;
  grid-template-columns: repeat(6, 1fr);
  gap: 44px 18px;
  max-width: 2328px;
  margin: 124px auto 0;
  padding: 0 35px 0 0;
  list-style: none;
`;

const CityLink = styled.a`
  display: grid;
  grid-template-columns: 41px 1fr;
  color: inherit;
  text-decoration: none;
`;

const CityName = styled.span`
  grid-column: 2;
  padding-bottom: 2px;
  font-size: 29px;
  line-height: 36px;
  text-align: center;
`;

const Hours = styled.span`
  display: flex;
  flex-direction: column;
  justify-content: space-between;
  padding: 2px 4px;
  color: #ffffff50;
  font-size: 26px;
  line-height: 32px;
  text-align: right;
`;

const Chart = styled.svg`
  display: block;
  width: 100%;
  height: 151px;
`;

const Months = styled.span`
  grid-column: 2;
  display: flex;
  justify-content: space-between;
  color: #ffffff50;
  font-size: 25px;
  line-height: 36px;
`;

const LegendRow = styled.ul`
  display: flex;
  justify-content: center;
  margin: 61px 0 0;
  padding: 0 28px 0 0;
  list-style: none;
`;

const LegendItem = styled.li`
  display: flex;
`;

const Chip = styled.span`
  width: ${(p) => p.$width}px;
  height: 37px;
  margin-top: 4px;
  border-radius: 8px;
  background: ${(p) => BANDS[p.$band]};
  color: #fff;
  font-size: 26px;
  line-height: 37px;
  text-align: center;
`;

const Limit = styled.span`
  display: flex;
  flex-direction: column;
  align-items: center;
  width: 14px;
  color: #ffffff50;
  font-size: 23px;
  font-style: italic;
  line-height: 32px;
  white-space: nowrap;
  &::before {
    content: '';
    width: 2px;
    height: 43px;
    background: currentColor;
  }
`;

const Links = styled.nav`
  display: flex;
  justify-content: center;
  gap: 88px;
  padding: 96px 0 158px;
`;

const FooterLink = styled.a`
  color: inherit;
  font-size: 29px;
  line-height: 48px;
  text-decoration: none;
`;

const ScrollThumb = styled.div`
  position: absolute;
  top: 4px;
  right: 4px;
  width: 14px;
  height: 437px;
  border-radius: 7px;
  background: #1b2939;
`;

function CityCard({ city }) {
  const [x, y] = city.at;
  return (
    <li>
      <CityLink href="#">
        <CityName>{city.name}</CityName>
        <Hours>
          <span>24</span>
          <span>0</span>
        </Hours>
        <Chart viewBox={`${x} ${y} 433 452`} preserveAspectRatio="none" aria-hidden="true">
          <rect x={x} y={y} width="434" height="453" fill={BANDS[city.base]} />
          {city.shapes.map(([band, kind, points], i) => (
            <path key={i} fill={BANDS[band]} d={contourPath(kind, points)} />
          ))}
        </Chart>
        <Months>
          <span>Jan</span>
          <span>Dec</span>
        </Months>
      </CityLink>
    </li>
  );
}

export default function App() {
  return (
    <>
      <GlobalStyle />
      <Page>
        <Header>
          <Brand href="#">
            <svg viewBox="0 0 52 52" aria-hidden="true">
              <circle cx="26" cy="26" r="26" fill="#4a77cb" />
              <path d="M27.5 6.5H35.5L27.5 22.5H37.5L17 46L23.5 26H16.5Z" fill="#fff" />
            </svg>
            Weather Spark
          </Brand>
          <Tools>
            <MenuButton type="button" aria-haspopup="true" $gap={12}>
              °F <Caret />
            </MenuButton>
            <MenuButton type="button" aria-haspopup="true" aria-label="Language" $gap={2}>
              <LanguageIcon viewBox="0 -10 68 68" aria-hidden="true">
                <path d="M11 0H57Q68 0 68 10V28Q68 38 57 38H38L20 48L25 38H11Q0 38 0 28V10Q0 0 11 0Z" fill="#bababa" />
                <text x="21" y="32" fill="#304e6c" fontSize="34" textAnchor="middle" fontFamily="Noto Sans, sans-serif">A</text>
                <text x="50" y="30" fill="#304e6c" fontSize="28" fontWeight="500" textAnchor="middle" fontFamily="Noto Sans CJK SC, sans-serif">文</text>
              </LanguageIcon>
              <Caret />
            </MenuButton>
          </Tools>
        </Header>

        <Hero>
          <Title>The Weather Year Round Anywhere on Earth</Title>
          <Subtitle>
            Climate reports with the weather by month, day, even hour. Great for event and trip planning!
          </Subtitle>
          <SearchForm role="search">
            <SearchInput type="text" placeholder="Find City or Airport" aria-label="Find City or Airport" />
            <SearchButton type="submit" aria-label="Search">
              <svg viewBox="0 0 32 32" fill="none" stroke="currentColor" aria-hidden="true">
                <circle cx="13" cy="13" r="11.3" strokeWidth="1.9" />
                <path d="M21.5 21.5L29 29.5" strokeWidth="3.8" strokeLinecap="round" />
              </svg>
            </SearchButton>
          </SearchForm>
        </Hero>

        <CityGrid>
          {CITIES.map((city) => (
            <CityCard key={city.name} city={city} />
          ))}
        </CityGrid>

        <LegendRow>
          {LEGEND.map((item) => (
            <LegendItem key={item.label}>
              <Chip $band={item.band} $width={item.width}>{item.label}</Chip>
              {item.limit && <Limit>{item.limit}</Limit>}
            </LegendItem>
          ))}
        </LegendRow>

        <Links>
          <FooterLink href="#">Interactive Map</FooterLink>
          <FooterLink href="#">Past Weather</FooterLink>
          <FooterLink href="#">Compare Cities</FooterLink>
        </Links>
        <ScrollThumb />
      </Page>
    </>
  );
}
